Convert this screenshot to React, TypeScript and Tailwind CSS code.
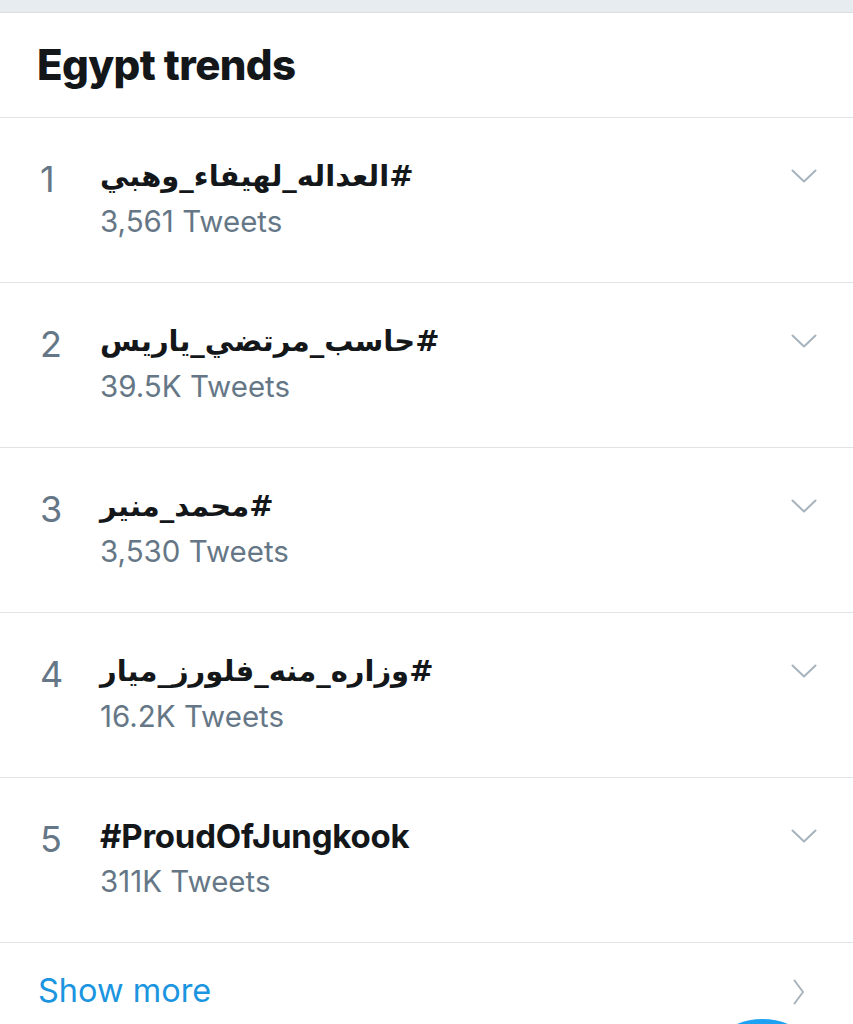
import React from "react";

const trends = [
  { rank: 1, tag: "#العداله_لهيفاء_وهبي", count: "3,561 Tweets", rtl: true },
  { rank: 2, tag: "#حاسب_مرتضي_ياريس", count: "39.5K Tweets", rtl: true },
  { rank: 3, tag: "#محمد_منير", count: "3,530 Tweets", rtl: true },
  { rank: 4, tag: "#وزاره_منه_فلورز_ميار", count: "16.2K Tweets", rtl: true },
  { rank: 5, tag: "#ProudOfJungkook", count: "311K Tweets", rtl: false },
];

function ChevronDown() {
  return (
    <svg width="26" height="15" viewBox="0 0 26 15" fill="none">
      <polyline points="1.5,1.5 13,12.5 24.5,1.5" stroke="#a7b3bd" strokeWidth="2" strokeLinecap="round" strokeLinejoin="round" />
    </svg>
  );
}

function ChevronRight() {
  return (
    <svg width="12" height="26" viewBox="0 0 12 26" fill="none">
      <polyline points="1.5,1.5 10,13 1.5,24.5" stroke="#a7b3bd" strokeWidth="2" strokeLinecap="round" strokeLinejoin="round" />
    </svg>
  );
}

export default function App() {
  return (
    <div className="w-[853px] h-[1024px] overflow-hidden bg-white relative" style={{ fontFamily: "Inter, 'DejaVu Sans', sans-serif" }}>
      <div className="h-[13px] bg-[#e6ecf0] border-b border-[#dcdfe2]" />
      <div className="h-[105px] flex items-center px-[37px] border-b border-[#e1e4e6]">
        <h1 className="text-[42px] font-extrabold tracking-[-0.6px] text-[#14171a] leading-none pb-[1px]">Egypt trends</h1>
      </div>
      {trends.map((t) => (
        <div key={t.rank} className="h-[165px] border-b border-[#e1e4e6] flex items-start pl-[38px] pr-[36px] pt-[38px]">
          <div className="w-[62px] text-[36px] text-[#657786] leading-none pt-[5px] pl-[2px]">{t.rank}</div>
          <div className="flex-1 flex flex-col">
            <div className="flex">
              {t.rtl ? (
                <span
                  dir="rtl"
                  className="text-[29px] font-bold text-[#14171a] leading-[40px]"
                  style={{ fontFamily: "'DejaVu Sans', sans-serif" }}
                >
                  {t.tag}
                </span>
              ) : (
                <span className="text-[33px] font-bold text-[#14171a] leading-[40px] tracking-[-0.2px]">{t.tag}</span>
              )}
            </div>
            <div className="text-[29.5px] text-[#657786] leading-[36px] mt-[7px]">{t.count}</div>
          </div>
          <div className="pt-[13px]">
            <ChevronDown />
          </div>
        </div>
      ))}
      <div className="h-[83px] flex items-center justify-between pl-[38px] pr-[48px] pt-[19px] pb-[5px]">
        <span className="text-[32.5px] text-[#1b95e0] leading-none">Show more</span>
        <ChevronRight />
      </div>
      <div className="absolute left-[695px] top-[1019px] w-[135px] h-[135px] rounded-full bg-[#1da1f2]" />
    </div>
  );
}
